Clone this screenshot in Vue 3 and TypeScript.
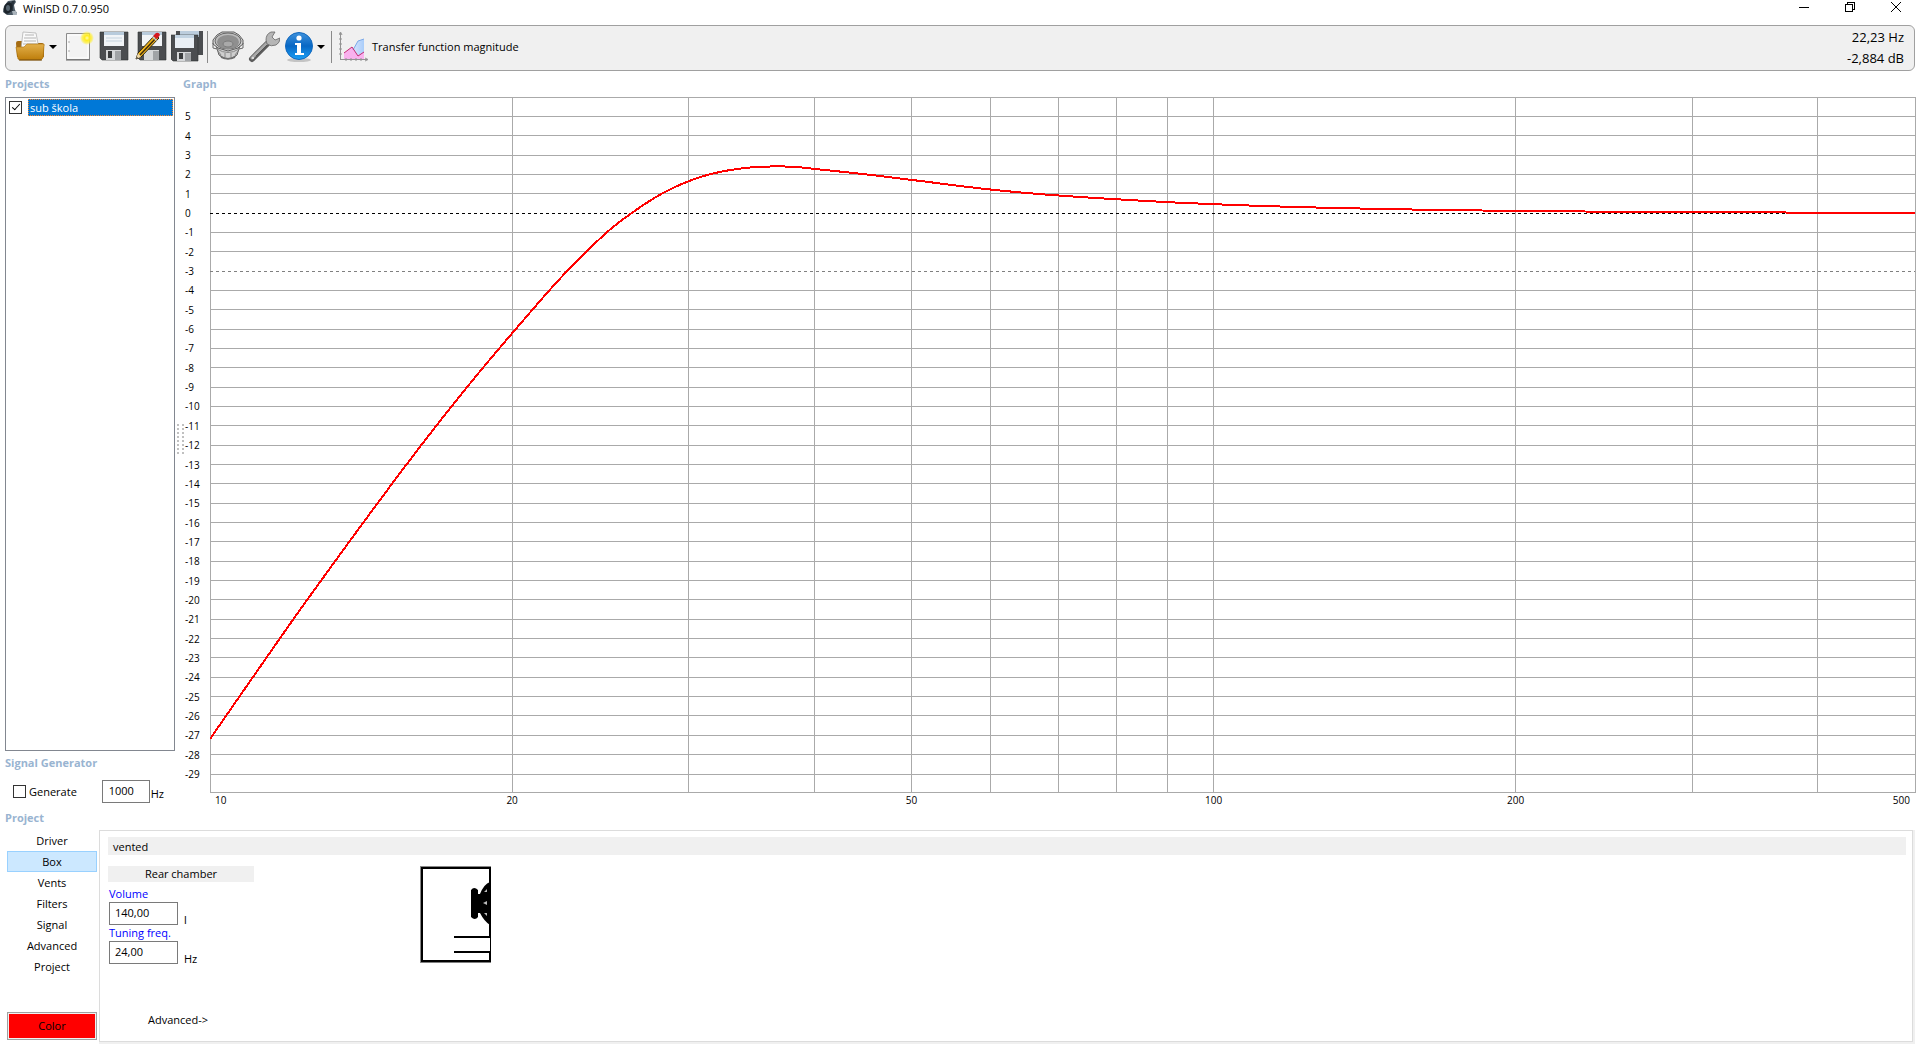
<script setup lang="ts">
import { ref } from 'vue'

const tabs = ['Driver', 'Box', 'Vents', 'Filters', 'Signal', 'Advanced', 'Project']
const activeTab = ref('Box')
const projectOn = ref(true)
const generate = ref(false)
const tone = ref('1000')
const volume = ref('140,00')
const tuning = ref('24,00')

const TOP_DB = 6
const BOTTOM_DB = -29.93
const FREQ_MIN = 10
const FREQ_MAX = 500

const xPos = (hz: number): string =>
  `${(Math.log(hz / FREQ_MIN) / Math.log(FREQ_MAX / FREQ_MIN)) * 100}%`
const yPos = (db: number): string => `${((TOP_DB - db) / (TOP_DB - BOTTOM_DB)) * 100}%`

const levels: number[] = Array.from({ length: 35 }, (_, i) => 5 - i)
const solidLevels = levels.filter((l) => l !== 0 && l !== -3)
const freqLines = [20, 30, 40, 50, 60, 70, 80, 90, 100, 200, 300, 400]
const freqLabels = [
  { hz: 10, anchor: 'start', dx: 5 },
  { hz: 20, anchor: 'middle', dx: 0 },
  { hz: 50, anchor: 'middle', dx: 0 },
  { hz: 100, anchor: 'middle', dx: 0 },
  { hz: 200, anchor: 'middle', dx: 0 },
  { hz: 500, anchor: 'end', dx: -5 },
]

// Response samples on the 1704 x 695 plot grid
const samples: [number, number][] = [
  [0, 642], [43, 580], [97, 503], [190, 376], [257, 290], [322, 213], [357, 174],
  [397, 135], [423, 115], [451, 97], [479, 84], [505, 76], [535, 71], [565, 69.4], [588, 70.2],
  [605, 72], [657, 77.500], [702, 83], [780, 92.500], [848, 98.500], [945, 104.500],
  [987, 106.500], [1038, 108.500], [1105, 110.500], [1201, 112.500], [1271, 113.500],
  [1374, 114.500], [1575, 115.500], [1704, 115.8],
]

// Slope at each sample, for a smooth cubic through all of them
const slopes = samples.map((_, i) => {
  const a = samples[Math.max(0, i - 1)]
  const b = samples[Math.min(samples.length - 1, i + 1)]
  return (b[1] - a[1]) / (b[0] - a[0])
})

const points: string[] = []
for (let i = 0; i < samples.length - 1; i++) {
  const [x0, y0] = samples[i]
  const [x1, y1] = samples[i + 1]
  const w = x1 - x0
  for (let x = x0; x < x1; x += 3) {
    const t = (x - x0) / w
    const y =
      (2 * t ** 3 - 3 * t ** 2 + 1) * y0 +
      (t ** 3 - 2 * t ** 2 + t) * w * slopes[i] +
      (3 * t ** 2 - 2 * t ** 3) * y1 +
      (t ** 3 - t ** 2) * w * slopes[i + 1]
    points.push(`${x},${y.toFixed(2)}`)
  }
}
points.push('1704,115.8')
const curve = points.join(' ')
</script>

<template>
  <div class="app">
    <header class="titlebar">
      <svg class="app-icon" width="16" height="16" viewBox="0 0 16 16">
        <path d="M6 1L13 0L14 2L12 5L13 10L15 13L13 15L5 15L1 12L2 6Z" fill="#4b5964" />
        <path d="M10 1l3 0-2 5 0 5-3 1-1-5z" fill="#2a343d" />
        <ellipse cx="6" cy="8" rx="4" ry="6" transform="rotate(22 6 8)" fill="#1c242b" />
        <ellipse cx="6" cy="8" rx="2" ry="3" fill="#56646f" />
        <path d="M10 11l4 0 1 4-4 0z" fill="#a9b3bb" />
      </svg>
      <h1>WinISD 0.7.0.950</h1>
      <div class="window-buttons">
        <button type="button" aria-label="Minimize">
          <svg width="12" height="12" viewBox="0 0 12 12"><path d="M1 6.5h10" /></svg>
        </button>
        <button type="button" aria-label="Restore">
          <svg width="12" height="12" viewBox="0 0 12 12"><path d="M1.500 3.500h7v7h-7zM3.500 3.500v-2h7v7h-2" /></svg>
        </button>
        <button type="button" aria-label="Close">
          <svg width="12" height="12" viewBox="0 0 12 12"><path d="M1 1l10 10M11 1L1 11" /></svg>
        </button>
      </div>
    </header>

    <div class="toolbar">
      <button class="tool wide" type="button" aria-label="Open project">
        <svg width="32" height="32" viewBox="0 0 32 32">
          <defs>
            <linearGradient id="folder" x1="0" y1="0" x2="0" y2="1">
              <stop offset="0" stop-color="#e3b04b" /><stop offset="1" stop-color="#bd7d0a" />
            </linearGradient>
          </defs>
          <path d="M1 12q0-2 2-2h6l2 2h16q2 0 2 2v12H2z" fill="#a56c13" />
          <path d="M8 1l13 1 3 16H6z" fill="#fafafa" stroke="#aaa" stroke-width=".7" />
          <path d="M10 4h9M9 7h12M9 10h12M8 13h14" stroke="#b4b4b4" />
          <path d="M3 28L1 16h8l3-3h16q2 0 1 2l-1 12-2 2H5z" fill="url(#folder)" stroke="#a9700d" stroke-width=".6" />
          <path d="M4 29h23" stroke="#744d0c" />
        </svg>
        <span class="arrow"></span>
      </button>
      <button class="tool" type="button" aria-label="New project">
        <svg width="32" height="32" viewBox="0 0 32 32">
          <defs>
            <radialGradient id="glow">
              <stop offset="0" stop-color="#fffbb0" /><stop offset=".35" stop-color="#ffec20" />
              <stop offset=".7" stop-color="#ffee30" stop-opacity=".7" /><stop offset="1" stop-color="#ffee30" stop-opacity="0" />
            </radialGradient>
          </defs>
          <path d="M3.500 2.500h23v26h-23z" fill="#f3f3f3" stroke="#8b8b8b" />
          <path d="M3 29h24" stroke="#666" />
          <path d="M5 4h20v23H5z" fill="none" stroke="#fff" />
          <path d="M6 10v2M6 19v2" stroke="#aaa" />
          <circle cx="24" cy="7" r="7" fill="url(#glow)" />
        </svg>
      </button>
      <button class="tool" type="button" aria-label="Save project">
        <svg width="32" height="32" viewBox="0 0 32 32">
          <path d="M1 1h28v28H3l-2-2z" fill="#4b4d50" stroke="#303234" stroke-width=".6" />
          <path d="M5 1h20v14H5z" fill="#f1f4f7" /><path d="M5 1h20v3H5z" fill="#b8cbdc" />
          <path d="M7 7h16M7 10h16" stroke="#c5d3df" />
          <path d="M7 19h15v10H7z" fill="#d5d7d9" /><path d="M9 20h4v7H9z" fill="#393b3d" />
          <path d="M16 20h6v9h-6z" fill="#a0a3a6" />
        </svg>
      </button>
      <button class="tool" type="button" aria-label="Edit project">
        <svg width="32" height="32" viewBox="0 0 32 32">
          <path d="M3 1h28v28H5l-2-2z" fill="#4b4d50" stroke="#303234" stroke-width=".6" />
          <path d="M7 1h20v14H7z" fill="#f1f4f7" /><path d="M7 1h20v3H7z" fill="#b8cbdc" />
          <path d="M9 19h15v10H9z" fill="#d5d7d9" /><path d="M18 20h6v9h-6z" fill="#a0a3a6" />
          <path d="M20 4l4 3L6 26l-5 2 2-6z" fill="#f0b51d" stroke="#29220f" stroke-width="1" />
          <path d="M21 7L5 24" stroke="#3c2c0d" stroke-width="1.500" />
          <path d="M3 22l3 4-5 2z" fill="#efd8a8" /><path d="M1 28l1-2 1 1z" fill="#222" />
          <path d="M18 5l3-3q3-1 4 2l-3 4z" fill="#d51820" /><path d="M17 6l1-1 4 4-1 1z" fill="#ccc" />
        </svg>
      </button>
      <button class="tool" type="button" aria-label="Save all">
        <svg width="33" height="32" viewBox="0 0 33 32">
          <path d="M5 0h27v24H5z" fill="#4b4d50" /><path d="M9 0h19v6H9z" fill="#bccddd" />
          <path d="M0 4h27v26H2l-2-2z" fill="#4b4d50" stroke="#303234" stroke-width=".6" />
          <path d="M4 4h19v13H4z" fill="#e9eff5" /><path d="M4 4h19v3H4z" fill="#c2d3e2" />
          <path d="M6 21h14v9H6z" fill="#d5d7d9" /><path d="M8 22h4v6H8z" fill="#393b3d" />
          <path d="M14 22h6v8h-6z" fill="#a0a3a6" />
        </svg>
      </button>
      <span class="divider"></span>
      <button class="tool" type="button" aria-label="Drivers">
        <svg width="32" height="32" viewBox="0 0 32 32">
          <path d="M3 11l4 13q9 8 18 0l4-13z" fill="#cfcfcf" stroke="#5c5c5c" />
          <path d="M8 24q8 6 16 0l-1 3q-7 3-14 0z" fill="#6f6f6f" />
          <path d="M5 18q11 7 22 0" fill="none" stroke="#8a8a8a" />
          <path d="M6 20l3 4M26 20l-3 4M13 22v4M19 22v4" stroke="#888" />
          <path d="M1 9l4-5 5-3h12l5 3 4 5v4l-5 4-10 3-10-3-5-4z" fill="#d4d4d4" stroke="#5d5d5d" />
          <ellipse cx="16" cy="10" rx="13" ry="8" fill="#bbb" stroke="#6a6a6a" />
          <ellipse cx="16" cy="11" rx="11" ry="7" fill="#8f8f8f" />
          <ellipse cx="16" cy="13" rx="5" ry="3" fill="#a9a9a9" stroke="#7c7c7c" />
          <path d="M1 12v5l4 1M31 12v5l-4 1" fill="none" stroke="#666" />
        </svg>
      </button>
      <button class="tool" type="button" aria-label="Options">
        <svg width="32" height="32" viewBox="0 0 32 32">
          <path d="M4 28L19 13" stroke="#5c5c5c" stroke-width="6" stroke-linecap="round" />
          <path d="M4 27L20 11" stroke="#a9a9a9" stroke-width="3" stroke-linecap="round" />
          <path d="M18 9q0-6 5-8l4 0-3 5 3 3 5-2q0 5-4 7-5 2-9-1z" fill="#b6b6b6" stroke="#666" stroke-width=".8" />
          <path d="M8 25L19 14" stroke="#555" stroke-width="1" /><circle cx="5" cy="27" r="1" fill="#eee" />
        </svg>
      </button>
      <button class="tool wide" type="button" aria-label="About">
        <svg width="32" height="32" viewBox="0 0 32 32">
          <defs>
            <linearGradient id="info" x1="0" y1="0" x2="0" y2="1">
              <stop offset="0" stop-color="#3f92dc" /><stop offset=".5" stop-color="#0867c4" /><stop offset="1" stop-color="#18a0f6" />
            </linearGradient>
          </defs>
          <ellipse cx="16" cy="29" rx="12" ry="2" fill="#c4c4c4" />
          <circle cx="16" cy="15" r="13.500" fill="url(#info)" stroke="#1268bd" />
          <circle cx="16" cy="7" r="2.600" fill="#fff" />
          <path d="M12 12h6v10h3v2h-9v-2h2v-8h-2z" fill="#fff" />
        </svg>
        <span class="arrow"></span>
      </button>
      <span class="divider"></span>
      <button class="graph-kind" type="button">
        <svg width="30" height="32" viewBox="0 0 30 32">
          <defs>
            <linearGradient id="area" x1="0" y1="0" x2="1" y2="0">
              <stop offset="0" stop-color="#f8f5ff" /><stop offset="1" stop-color="#a9cdfa" />
            </linearGradient>
          </defs>
          <path d="M6 28l8-10 5-8 6-2v20z" fill="url(#area)" />
          <path d="M5 22l8-6 6 9 6-4v7H5z" fill="#f9b1ee" />
          <path d="M14 19l5-9 6-2" fill="none" stroke="#7ca9e8" />
          <path d="M5 22l8-6 6 9 6-4" fill="none" stroke="#c42b73" />
          <path d="M1.500 29V2M0 4l1.500-3L3 4M1 28.500h27M26 27l3 1.500-3 1.500M0 8h3M0 13h3M0 18h3M0 23h3M7 27v3M12 27v3M17 27v3M22 27v3" fill="none" stroke="#929292" />
        </svg>
        Transfer function magnitude
      </button>
      <div class="readout"><span>22,23 Hz</span><span>-2,884 dB</span></div>
    </div>

    <main class="workspace">
      <aside class="sidebar">
        <h2>Projects</h2>
        <ul class="project-list">
          <li>
            <input id="p1" v-model="projectOn" type="checkbox" />
            <label for="p1">sub škola</label>
          </li>
        </ul>
        <h2 class="generator-title">Signal Generator</h2>
        <div class="generator">
          <input id="gen" v-model="generate" type="checkbox" />
          <label for="gen">Generate</label>
          <input id="tone" v-model="tone" class="field" type="text" aria-label="Frequency" />
          <label class="unit" for="tone">Hz</label>
        </div>
      </aside>
      <div class="splitter"><span></span></div>
      <section class="graph">
        <h2>Graph</h2>
        <svg class="chart" width="100%" height="100%">
          <g class="grid">
            <line v-for="f in freqLines" :key="f" :x1="xPos(f)" :x2="xPos(f)" y1="0" y2="100%" />
            <line v-for="l in solidLevels" :key="l" x1="0" x2="100%" :y1="yPos(l)" :y2="yPos(l)" />
            <rect x="0" y="0" width="100%" height="100%" />
          </g>
          <line class="zero" x1="0" x2="100%" :y1="yPos(0)" :y2="yPos(0)" />
          <line class="cutoff" x1="0" x2="100%" :y1="yPos(-3)" :y2="yPos(-3)" />
          <svg width="100%" height="100%" viewBox="0 0 1704 695" preserveAspectRatio="none">
            <polyline class="curve" :points="curve" />
          </svg>
          <text v-for="l in levels" :key="`l${l}`" x="-25" :y="yPos(l)" dy="4">{{ l }}</text>
          <text
            v-for="f in freqLabels"
            :key="`f${f.hz}`"
            :x="xPos(f.hz)"
            y="100%"
            :dx="f.dx"
            dy="12"
            :text-anchor="f.anchor"
          >{{ f.hz }}</text>
        </svg>
      </section>
    </main>

    <section class="project">
      <nav class="tabs">
        <h2>Project</h2>
        <button
          v-for="t in tabs"
          :key="t"
          type="button"
          class="tab"
          :class="{ active: t === activeTab }"
          @click="activeTab = t"
        >{{ t }}</button>
        <button class="color" type="button">Color</button>
      </nav>
      <div class="panel">
        <div class="box-type">vented</div>
        <div class="panel-body">
          <div class="chamber">
            <h3>Rear chamber</h3>
            <label class="caption" for="vol">Volume</label>
            <div class="entry"><input id="vol" v-model="volume" class="field" type="text" /><span>l</span></div>
            <label class="caption" for="tune">Tuning freq.</label>
            <div class="entry"><input id="tune" v-model="tuning" class="field" type="text" /><span>Hz</span></div>
            <button class="advanced" type="button">Advanced-&gt;</button>
          </div>
          <svg class="cabinet" width="71" height="97" viewBox="0 0 71 97">
            <path d="M2 96V2H70M1 95.500h70" fill="none" stroke="#000" stroke-width="2" />
            <path d="M.5 0v97M0 .5h71" stroke="#888" />
            <path d="M70 1v69M70 86v10M34 71h36M34 86h36M2 95h68" stroke="#000" stroke-width="2" />
            <path d="M70.500 70v16" stroke="#000" />
            <path d="M51 24q3-4 7 0v4h2q4-10 10-12v43q-6-4-10-12h-2v4q-3 4-7 0z" fill="#000" />
            <path d="M64 26l3-3v3zM63 37l4-2v4zM64 47l3 3v-3z" fill="#bbb" />
          </svg>
        </div>
      </div>
    </section>
  </div>
</template>

<style>
body {
  background: #fff;
}
</style>

<style scoped>
.app {
  display: flex;
  flex-direction: column;
  min-height: 100vh;
  box-sizing: border-box;
  padding-bottom: 4px;
  font: 11px/14px "Open Sans", "Noto Sans", sans-serif;
  color: #000;
}
h1, h2, h3, ul { margin: 0; padding: 0; font: inherit; }
button { margin: 0; padding: 0; border: 0; background: none; font: inherit; color: inherit; }
input { margin: 0; font: inherit; color: inherit; box-sizing: border-box; }
svg { flex: none; display: block; }
h2 { color: #99b4d1; font: bold 11px/12px "Open Sans", "Noto Sans", sans-serif; }

.titlebar { display: flex; align-items: flex-start; height: 25px; padding: 0 0 0 2px; }
.titlebar h1 { margin-left: 5px; line-height: 17px; }
.window-buttons { display: flex; margin-left: auto; }
.window-buttons button { width: 46px; height: 14px; display: flex; justify-content: center; align-items: center; }
.window-buttons path { fill: none; stroke: #000; shape-rendering: crispEdges; }

.toolbar {
  display: flex;
  align-items: center;
  height: 46px;
  box-sizing: border-box;
  margin: 0 4px 0 5px;
  padding: 0 10px 2px 8px;
  border: 1px solid #a0a0a0;
  border-radius: 6px;
  background: #f0f0f0;
}
.tool { width: 36px; height: 36px; display: flex; align-items: center; justify-content: center; flex: none; }
.tool.wide { width: 47px; justify-content: space-between; padding: 0 4px 0 1px; box-sizing: border-box; }
.arrow { border: 4px solid transparent; border-top-color: #000; border-bottom: 0; }
.divider { width: 1px; height: 32px; margin: 0 2px; background: #8a8a8a; }
.graph-kind { display: flex; align-items: center; gap: 3px; margin-left: 5px; }
.readout { display: flex; flex-direction: column; margin-left: auto; text-align: right; font-size: 13px; line-height: 21px; padding-top: 2px; }

.workspace { display: flex; flex: 1 1 700px; min-height: 0; padding: 5px 4px 0 5px; }
.sidebar { width: 170px; flex: none; display: flex; flex-direction: column; padding: 2px 0 9px; }
.project-list { flex: 1; list-style: none; border: 1px solid #828790; margin-top: 7px; padding: 1px; }
.project-list li { display: flex; align-items: center; gap: 6px; padding-left: 2px; }
.project-list label { flex: 1; height: 17px; line-height: 17px; padding-left: 2px; box-sizing: border-box; background: #0078d7; color: #fff; outline: 1px dotted #ff8728; outline-offset: -1px; }
input[type='checkbox'] { appearance: none; width: 13px; height: 13px; border: 1px solid #333; background: #fff; flex: none; }
input[type='checkbox']:checked::after { content: ''; display: block; width: 3px; height: 7px; margin: 0 0 0 4px; border: solid #000; border-width: 0 1px 1px 0; transform: rotate(42deg); }
.generator-title { margin-top: 6px; }
.generator { display: flex; height: 23px; margin: 11px 0 0 8px; align-items: center; }
.generator label { margin-left: 3px; }
.generator .field { width: 48px; margin-left: auto; }
.generator .unit { margin: 4px 11px 0 1px; }
.field { height: 23px; border: 1px solid #7a7a7a; background: #fff; padding: 0 6px 2px; }

.splitter { width: 10px; flex: none; display: flex; align-items: center; justify-content: center; padding-bottom: 10px; box-sizing: border-box; }
.splitter span { width: 7px; height: 30px; background: repeating-linear-gradient(transparent 0 2px, #fff 2px 4px), linear-gradient(90deg, #c0c0c0 2px, transparent 2px) 0 0 / 5px 4px; }
.graph { flex: 1; min-width: 0; display: flex; flex-direction: column; padding: 2px 0 20px; }
.graph h2 { margin-left: -2px; }
.chart { flex: 1; width: auto; min-height: 0; height: auto; margin: 7px 0 0 25px; overflow: visible; }
.grid line, .grid rect { fill: none; stroke: #aaa; shape-rendering: crispEdges; }
.zero, .cutoff { stroke: #000; stroke-dasharray: 3 3; shape-rendering: crispEdges; }
.cutoff { stroke: #808080; }
.curve { fill: none; stroke: #f00; stroke-width: 2px; vector-effect: non-scaling-stroke; shape-rendering: crispEdges; }
.chart text { font-size: 10px; }

.project { display: flex; gap: 2px; padding: 0 6px 0 5px; }
.tabs { width: 92px; flex: none; display: flex; flex-direction: column; }
.tabs h2 { margin-bottom: 6px; }
.tab { height: 21px; margin: 0 0 0 2px; border: 1px solid transparent; }
.tab.active { background: #cce8ff; border-color: #99d1ff; }
.color { height: 28px; margin: auto 0 2px 2px; border: 1px solid #a0a0a0; background: #f00; box-shadow: inset 0 0 0 1px #f0f0f0; }
.panel { flex: 1; min-width: 0; margin-top: 18px; min-height: 212px; box-sizing: border-box; border: 1px solid #dcdcdc; box-shadow: 1px 1px 0 1px #f0f0f0; padding: 6px 6px 0 8px; display: flex; flex-direction: column; }
.box-type { height: 18px; line-height: 19px; background: #f0f0f0; padding-left: 5px; }
.panel-body { display: flex; padding-top: 11px; gap: 166px; }
.chamber { width: 146px; display: flex; flex-direction: column; align-items: flex-start; }
.chamber h3 { align-self: stretch; height: 16px; line-height: 16px; background: #f0f0f0; text-align: center; margin-bottom: 4px; }
.caption { color: #00f; height: 16px; line-height: 15px; margin-left: 1px; }
.entry { display: flex; gap: 6px; align-items: flex-end; height: 23px; margin-left: 1px; }
.entry .field { width: 69px; align-self: flex-start; padding: 0 5px 2px; }
.entry span { line-height: 14px; margin-bottom: -2px; }
.advanced { margin: 49px 0 0 40px; }
</style>
